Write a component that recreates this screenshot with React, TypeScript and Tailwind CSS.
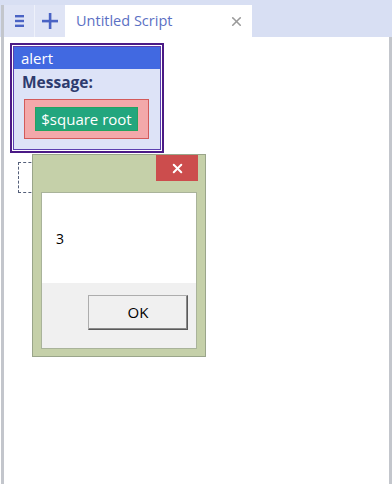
import { X } from "lucide-react";

const font = { fontFamily: '"Open Sans", "Noto Sans", "Liberation Sans", sans-serif' };

function TabBar() {
  return (
    <div className="flex h-[37px] items-end bg-[#d8dff3] pl-[4px]">
      <button className="flex h-[32px] w-[31px] items-center justify-center border-r border-[#eef1fa] bg-[#dfe4f5]">
        <svg width="9" height="12" viewBox="0 0 9 12">
          <rect x="0" y="0" width="9" height="2.4" fill="#4a63c4" />
          <rect x="0" y="4.8" width="9" height="2.4" fill="#4a63c4" />
          <rect x="0" y="9.6" width="9" height="2.4" fill="#4a63c4" />
        </svg>
      </button>
      <button className="flex h-[32px] w-[30px] items-center justify-center bg-[#dfe4f5]">
        <svg width="16" height="16" viewBox="0 0 16 16">
          <rect x="6.8" y="0" width="2.6" height="16" fill="#4a63c4" />
          <rect x="0" y="6.8" width="16" height="2.6" fill="#4a63c4" />
        </svg>
      </button>
      <div className="flex h-[32px] w-[187px] items-center justify-between bg-white pl-[11px] pr-[8px]">
        <span className="text-[14.5px] text-[#5b70c4]">Untitled Script</span>
        <X size={15} strokeWidth={2.6} className="text-[#9a9a9a]" />
      </div>
    </div>
  );
}

function AlertBlock() {
  return (
    <div className="w-[154px] border-[2px] border-[#4b1a86] bg-white p-[1px]">
      <div className="border border-[#5b3fb0] bg-[#dde3f7]">
        <div className="flex h-[22px] items-center bg-[#4169e1] pl-[7px] text-[15px] text-white">
          alert
        </div>
        <div className="px-[8px] pb-[10px] pt-[3px]">
          <div className="text-[15.5px] font-bold leading-[21px] text-[#2e3b6e]">Message:</div>
          <div className="mt-[6px] ml-[2px] w-[125px] border border-[#d35a5a] bg-[#f3a8aa] px-[10px] py-[7px]">
            <div className="flex h-[24px] w-[103px] items-center justify-center border border-[#23a35f] bg-[#22a67e] text-[15px] text-white">
              $square root
            </div>
          </div>
        </div>
      </div>
    </div>
  );
}

function Dialog() {
  return (
    <div className="absolute left-[32px] top-[154px] w-[174px] border border-[#9aa58a] bg-[#c5d0a9] px-[8px] pb-[7px]">
      <div className="flex h-[37px] justify-end">
        <div className="mr-[-1px] flex h-[26px] w-[42px] items-center justify-center bg-[#cc4d4d]">
          <X size={15} strokeWidth={3.2} className="text-white" />
        </div>
      </div>
      <div className="border border-[#a9b39a]">
        <div className="h-[90px] bg-white pl-[14px] pt-[35px] text-[14px] text-black">3</div>
        <div className="flex h-[65px] justify-end bg-[#f0f0f0] pr-[8px] pt-[12px]">
          <button className="flex h-[35px] w-[100px] items-center justify-center border border-[#adadad] border-b-[#5a5a5a] border-r-[#5a5a5a] bg-[#f0f0f0] text-[15px] text-black shadow-[inset_-1px_-1px_0_#8a8a8a]">
            OK
          </button>
        </div>
      </div>
    </div>
  );
}

export default function App() {
  return (
    <div className="relative flex h-[484px] w-[392px] flex-col overflow-hidden bg-white" style={font}>
      <div className="absolute bottom-0 left-[1px] top-[5px] w-[3px] bg-[#c3c6cc]" />
      <TabBar />
      <div className="relative flex-1 border-r-[3px] border-[#c3c6cc] pl-[10px] pt-[6px]">
        <AlertBlock />
        <div className="ml-[8px] mt-[9px] h-[31px] w-[60px] border border-dashed border-[#55607a]" />
      </div>
      <Dialog />
    </div>
  );
}
